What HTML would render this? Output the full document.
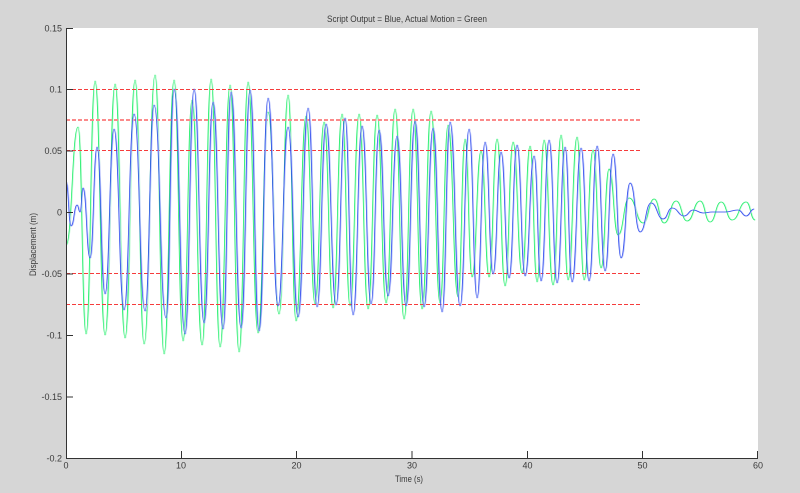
<!DOCTYPE html>
<html>
<head>
<meta charset="utf-8">
<style>
html,body{margin:0;padding:0;background:#d6d6d6;}
svg{display:block;}
text{font-family:"Liberation Sans",sans-serif;font-size:9px;fill:#3a3a3a;}
</style>
</head>
<body>
<svg width="800" height="493" viewBox="0 0 800 493" xmlns="http://www.w3.org/2000/svg">
<defs>
<path id="g" fill="none" stroke-linejoin="round" d="M66 245C72 245 72 127 78 127C82 127 82 334 86 334C90.500 334 90.500 81 95 81C100 81 100 335 105 335C110 335 110 84 115 84C120 84 120 338 125 338C130 338 130 80 135 80C139.500 80 139.500 344 144 344C149.500 344 149.500 75 155 75C159.500 75 159.500 354 164 354C169 354 169 80 174 80C178.500 80 178.500 341 183 341C187.500 341 187.500 100 192 100C197 100 197 345 202 345C206.500 345 206.500 79 211 79C215.500 79 215.500 347 220 347C225 347 225 85 230 85C234.500 85 234.500 352 239 352C243.500 352 243.500 82 248 82C253 82 253 333 258 333C263 333 263 112 268 112C273.500 112 273.500 314 279 314C283.500 314 283.500 95 288 95C292 95 292 321 296 321C301 321 301 116 306 116C310.500 116 310.500 304 315 304C319.500 304 319.500 122 324 122C328.500 122 328.500 308 333 308C337.500 308 337.500 114 342 114C346 114 346 306 350 306C354.500 306 354.500 114 359 114C363.500 114 363.500 309 368 309C372.500 309 372.500 115 377 115C381.500 115 381.500 303 386 303C390.500 303 390.500 109 395 109C399.500 109 399.500 319 404 319C408.500 319 408.500 109 413 109C417.500 109 417.500 309 422 309C426.500 309 426.500 111 431 111C435.500 111 435.500 303 440 303C444 303 444 125 448 125C453 125 453 297 458 297C461.500 297 461.500 139 465 139C468.500 139 468.500 277 472 277C476.500 277 476.500 151 481 151C485 151 485 277 489 277C493 277 493 139 497 139C501 139 501 286 505 286C509 286 509 142 513 142C517.500 142 517.500 273 522 273C526 273 526 146 530 146C533.500 146 533.500 282 537 282C540.500 282 540.500 140 544 140C548.500 140 548.500 285 553 285C557 285 557 135 561 135C564.500 135 564.500 280 568 280C572.500 280 572.500 137 577 137C580.500 137 580.500 280 584 280C588.500 280 588.500 150 593 150C597 150 597 268 601 268C605 268 605 169 609 169C613.500 169 613.500 235 618 235C623.500 235 623.500 198 629 198C636 198 636 223 643 223C648.500 223 648.500 199 654 199C659 199 659 223 664 223C670 223 670 201 676 201C681.500 201 681.500 221 687 221C693.500 221 693.500 201 700 201C705 201 705 222 710 222C715.500 222 715.500 202 721 202C726.500 202 726.500 220 732 220C739 220 739 202 746 202C750.500 202 750.500 220 755 220"/>
<path id="b" fill="none" stroke-linejoin="round" d="M66 182C68.500 182 68.500 226 71 226C74 226 74 205 77 205C78.500 205 78.500 212 80 212C81.500 212 81.500 188 83 188C86.500 188 86.500 258 90 258C93.500 258 93.500 147 97 147C101 147 101 294 105 294C109.500 294 109.500 129 114 129C119 129 119 310 124 310C129 310 129 114 134 114C139.500 114 139.500 311 145 311C149.500 311 149.500 105 154 105C160 105 160 318 166 318C170 318 170 89 174 89C179.500 89 179.500 334 185 334C189.500 334 189.500 89 194 89C199 89 199 323 204 323C208.500 323 208.500 102 213 102C218 102 218 329 223 329C227 329 227 92 231 92C236 92 236 328 241 328C245.500 328 245.500 90 250 90C254.500 90 254.500 331 259 331C263.500 331 263.500 98 268 98C273 98 273 306 278 306C283 306 283 127 288 127C293 127 293 317 298 317C303 317 303 108 308 108C312.500 108 312.500 307 317 307C321.500 307 321.500 124 326 124C331 124 331 305 336 305C340.500 305 340.500 118 345 118C349 118 349 315 353 315C357.500 315 357.500 126 362 126C366.500 126 366.500 304 371 304C375 304 375 130 379 130C383.500 130 383.500 296 388 296C392.500 296 392.500 136 397 136C401.500 136 401.500 306 406 306C410.500 306 410.500 121 415 121C419.500 121 419.500 307 424 307C428.500 307 428.500 128 433 128C437.500 128 437.500 312 442 312C446 312 446 122 450 122C455 122 455 306 460 306C464.500 306 464.500 129 469 129C473 129 473 298 477 298C481 298 481 142 485 142C489 142 489 274 493 274C497 274 497 152 501 152C505 152 505 278 509 278C513 278 513 145 517 145C521 145 521 276 525 276C529.500 276 529.500 156 534 156C537.500 156 537.500 281 541 281C545 281 545 140 549 140C553 140 553 283 557 283C561 283 561 147 565 147C568.500 147 568.500 282 572 282C576.500 282 576.500 148 581 148C585 148 585 281 589 281C593 281 593 146 597 146C601 146 601 271 605 271C609 271 609 154 613 154C617 154 617 258 621 258C625.500 258 625.500 183 630 183C635 183 635 232 640 232C645.500 232 645.500 203 651 203C657 203 657 219 663 219C667.500 219 667.500 208 672 208C678 208 678 216 684 216C688.500 216 688.500 210 693 210C698 210 698 213 703 213C707.500 213 707.500 212 712 212C718.500 212 718.500 212 725 212C731.500 212 731.500 210 738 210C742 210 742 216 746 216C750 216 750 209 754 209"/>
</defs>

<rect x="66" y="28" width="692" height="430.500" fill="#fff"/>

<use href="#g" stroke="#bdfbd2" stroke-width="0.800" transform="translate(0.800 0)"/>
<use href="#g" stroke="#20ee6a" stroke-width="0.800"/>

<g fill="none" stroke="#f63c3c" stroke-width="1" stroke-dasharray="4 2">
<path d="M66 89.500H642"/>
<path d="M66 150.500H642"/>
<path d="M66 304.500H642"/>
<path d="M66 273.500H642"/>
<path d="M66 120H642" stroke="#fb8a8a" stroke-width="2"/>
</g>

<use href="#b" stroke="#bcc4fc" stroke-width="0.800" transform="translate(0.800 0)"/>
<use href="#b" stroke="#3350ee" stroke-width="0.800"/>

<g fill="none" stroke="#333" stroke-width="1">
<path d="M66.500 28V459M66 458.500H758"/>
<path d="M66 28.500H73M66 89.500H73M66 151H73M66 212.500H73M66 274H73M66 335.500H73M66 397H73"/>
<path d="M181.500 458V451M296.500 458V451M412 458V451M527.500 458V451M642.500 458V451M757.500 458V451"/>
</g>

<g text-anchor="end">
<text x="62" y="31.500">0.15</text>
<text x="62" y="92.500">0.1</text>
<text x="62" y="154">0.05</text>
<text x="62" y="215.500">0</text>
<text x="62" y="277">-0.05</text>
<text x="62" y="338.500">-0.1</text>
<text x="62" y="400">-0.15</text>
<text x="62" y="461.500">-0.2</text>
</g>
<g text-anchor="middle">
<text x="66" y="468.500">0</text>
<text x="181" y="468.500">10</text>
<text x="296.500" y="468.500">20</text>
<text x="412" y="468.500">30</text>
<text x="527.500" y="468.500">40</text>
<text x="642.500" y="468.500">50</text>
<text x="758" y="468.500">60</text>
</g>
<text x="327" y="22" textLength="160" lengthAdjust="spacingAndGlyphs">Script Output = Blue, Actual Motion = Green</text>
<text x="395" y="482" textLength="28" lengthAdjust="spacingAndGlyphs">Time (s)</text>
<text transform="translate(36 276) rotate(-90)" textLength="63" lengthAdjust="spacingAndGlyphs">Displacement (m)</text>
</svg>
</body>
</html>
